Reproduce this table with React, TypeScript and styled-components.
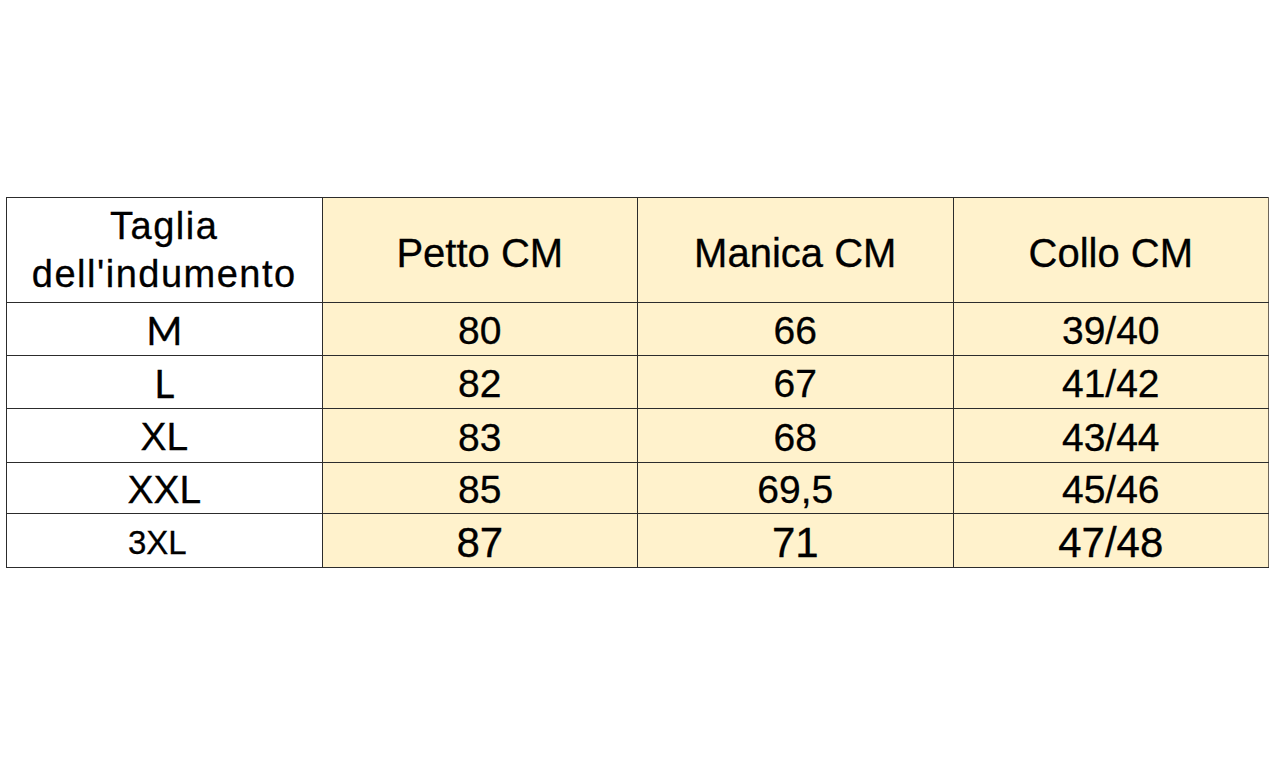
import React from "react";
import styled, { createGlobalStyle } from "styled-components";

const Global = createGlobalStyle`
  html, body { margin: 0; padding: 0; background: #ffffff; }
  body { font-family: "Liberation Sans", Arial, sans-serif; color: #000; }
`;

const Page = styled.div`
  width: 1280px;
  height: 768px;
  box-sizing: border-box;
  padding: 197px 0 0 6px;
  background: #ffffff;
`;

const Table = styled.table`
  width: 1263px;
  table-layout: fixed;
  border-collapse: collapse;
  border: 1px solid #2c2c2c;
  border-right-color: #6e665a;
`;

const Row = styled.tr<{ $h: number }>`
  height: ${(p) => p.$h}px;
`;

const Cell = styled.td<{
  $label?: boolean;
  $size: number;
  $font?: string;
  $shift?: number;
  $ls?: number;
  $lh?: number;
  $offset?: number;
}>`
  border: 1px solid #2c2c2c;
  padding: ${(p) => p.$shift ?? 5}px ${(p) => p.$offset ?? 0}px 0 0;
  text-align: center;
  vertical-align: middle;
  background: ${(p) => (p.$label ? "#ffffff" : "#fff2cc")};
  font-family: ${(p) => p.$font ?? '"Liberation Sans", Arial, sans-serif'};
  font-size: ${(p) => p.$size}px;
  letter-spacing: ${(p) => p.$ls ?? 0}px;
  line-height: ${(p) => (p.$lh ? `${p.$lh}px` : "1.15")};
  color: #000;
  -webkit-text-stroke: 0.3px #000;
  white-space: nowrap;
  overflow: hidden;
  &:last-child { border-right-color: #6e665a; }
`;

type Line = {
  label: string;
  size: number;
  font?: string;
  offset?: number;
  values: string[];
  vsize: number;
  h: number;
};

const rows: Line[] = [
  { label: "M", size: 39, font: "Lato, sans-serif", values: ["80", "66", "39/40"], vsize: 39, h: 53 },
  { label: "L", size: 39, font: "Lato, sans-serif", values: ["82", "67", "41/42"], vsize: 39, h: 53 },
  { label: "XL", size: 39, values: ["83", "68", "43/44"], vsize: 39, h: 54 },
  { label: "XXL", size: 39, values: ["85", "69,5", "45/46"], vsize: 39, h: 51 },
  { label: "3XL", size: 33, offset: 14, values: ["87", "71", "47/48"], vsize: 42, h: 53 },
];

export default function App() {
  return (
    <Page>
      <Global />
      <Table>
        <tbody>
          <Row $h={105}>
            <Cell $label $size={38} $ls={1.5} $lh={48} $shift={0}>
              Taglia
              <br />
              dell'indumento
            </Cell>
            <Cell $size={40} $shift={6}>Petto CM</Cell>
            <Cell $size={40} $shift={6}>Manica CM</Cell>
            <Cell $size={40} $shift={6}>Collo CM</Cell>
          </Row>
          {rows.map((r) => (
            <Row key={r.label} $h={r.h}>
              <Cell $label $size={r.size} $font={r.font} $shift={r.font ? 2 : 4} $offset={r.offset}>
                {r.label}
              </Cell>
              {r.values.map((v, i) => (
                <Cell key={i} $size={r.vsize} $shift={5}>
                  {v}
                </Cell>
              ))}
            </Row>
          ))}
        </tbody>
      </Table>
    </Page>
  );
}
